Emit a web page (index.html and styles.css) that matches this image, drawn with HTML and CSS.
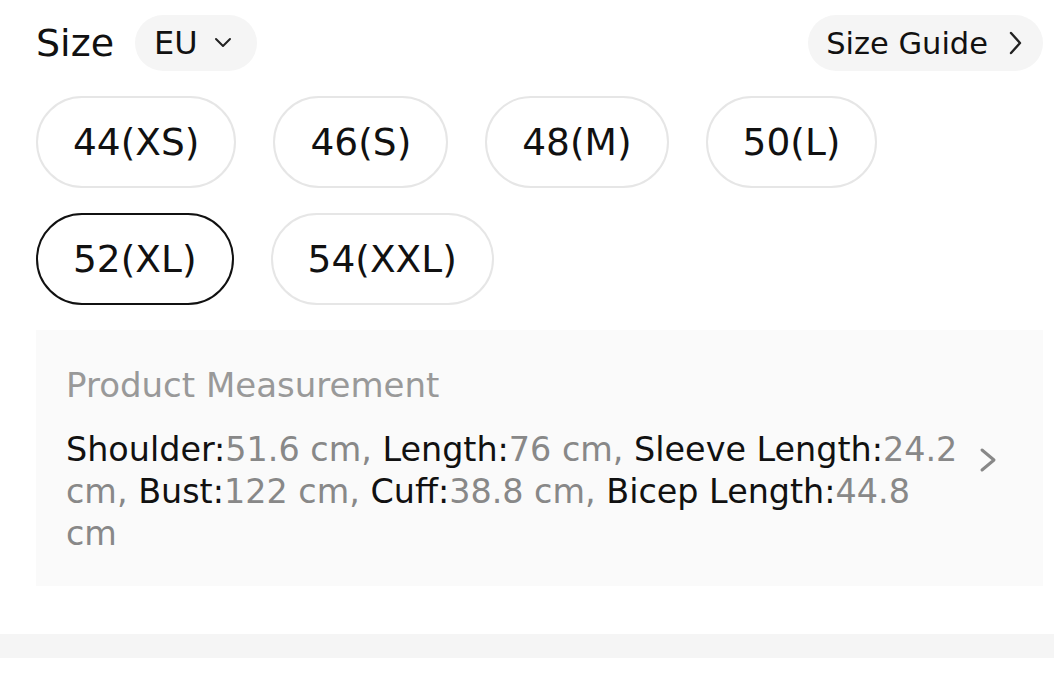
FILE: index.html
```html
<!DOCTYPE html>
<html>
<head>
<meta charset="utf-8">
<link rel="stylesheet" href="styles.css">
</head>
<body>
<div class="page">
  <div class="head">
    <div class="head-left">
      <span class="title">Size</span>
      <span class="pill eu">EU
        <svg class="caret" viewBox="0 0 24 14" width="24" height="14"><path d="M5 3 L12 10 L19 3" fill="none" stroke="#222" stroke-width="2" stroke-linecap="round" stroke-linejoin="round"/></svg>
      </span>
    </div>
    <span class="pill guide">Size Guide
      <svg class="chev" viewBox="0 0 14 26" width="14" height="26"><path d="M3 3 L12 13 L3 23" fill="none" stroke="#222" stroke-width="2.4" stroke-linecap="round" stroke-linejoin="round"/></svg>
    </span>
  </div>
  <div class="sizes">
    <div class="size">44(XS)</div>
    <div class="size">46(S)</div>
    <div class="size">48(M)</div>
    <div class="size">50(L)</div>
    <div class="size selected">52(XL)</div>
    <div class="size">54(XXL)</div>
  </div>
  <div class="measure">
    <div class="m-title">Product Measurement</div>
    <div class="m-row">
      <div class="m-text"><span class="k">Shoulder:</span><span class="v">51.6 cm, </span><span class="k">Length:</span><span class="v">76 cm, </span><span class="k">Sleeve Length:</span><span class="v">24.2 cm, </span><span class="k">Bust:</span><span class="v">122 cm, </span><span class="k">Cuff:</span><span class="v">38.8 cm, </span><span class="k">Bicep Length:</span><span class="v">44.8 cm</span></div>
      <svg class="m-chev" viewBox="0 0 18 26" width="18" height="26"><path d="M3 3 L15 13 L3 23" fill="none" stroke="#888" stroke-width="3" stroke-linecap="round" stroke-linejoin="round"/></svg>
    </div>
  </div>
</div>
<div class="strip"></div>
</body>
</html>
```
FILE: styles.css
```css
* { box-sizing: border-box; }
html, body { margin: 0; padding: 0; background: #fff; }
body { font-family: "DejaVu Sans", "Noto Sans", sans-serif; color: #111; width: 1054px; height: 676px; overflow: hidden; }
.page { padding: 15px 11px 0 36px; }
.head { display: flex; justify-content: space-between; align-items: center; height: 56px; }
.head-left { display: flex; align-items: center; gap: 21px; }
.title { font-size: 38px; line-height: 1; }
.pill { display: inline-flex; align-items: center; background: #f5f5f5; border-radius: 28px; height: 56px; color: #111; }
.eu { padding: 0 22px 0 19px; gap: 13px; font-size: 32px; }
.guide { padding: 0 21px 0 18px; gap: 20px; font-size: 30.5px; }
.caret { display: block; }
.chev { display: block; }
.sizes { display: flex; flex-wrap: wrap; gap: 25px 37px; margin-top: 25px; width: 880px; }
.size { height: 92px; border: 2px solid #e6e6e6; border-radius: 46px; padding: 0 35px; display: flex; align-items: center; font-size: 37.5px; }
.size.selected { border-color: #111; }
.measure { margin-top: 25px; background: #fafafa; height: 256px; padding: 33px 30px 0 30px; }
.m-title { font-size: 34px; color: #999; line-height: 44px; }
.m-row { display: flex; align-items: flex-start; margin-top: 22px; }
.m-text { flex: none; width: 895px; font-size: 33.4px; line-height: 42px; color: #111; }
.v { color: #888; }
.m-chev { flex: none; margin-top: 18px; margin-left: 18px; }
.strip { margin-top: 48px; height: 24px; background: #f5f5f5; }
```
